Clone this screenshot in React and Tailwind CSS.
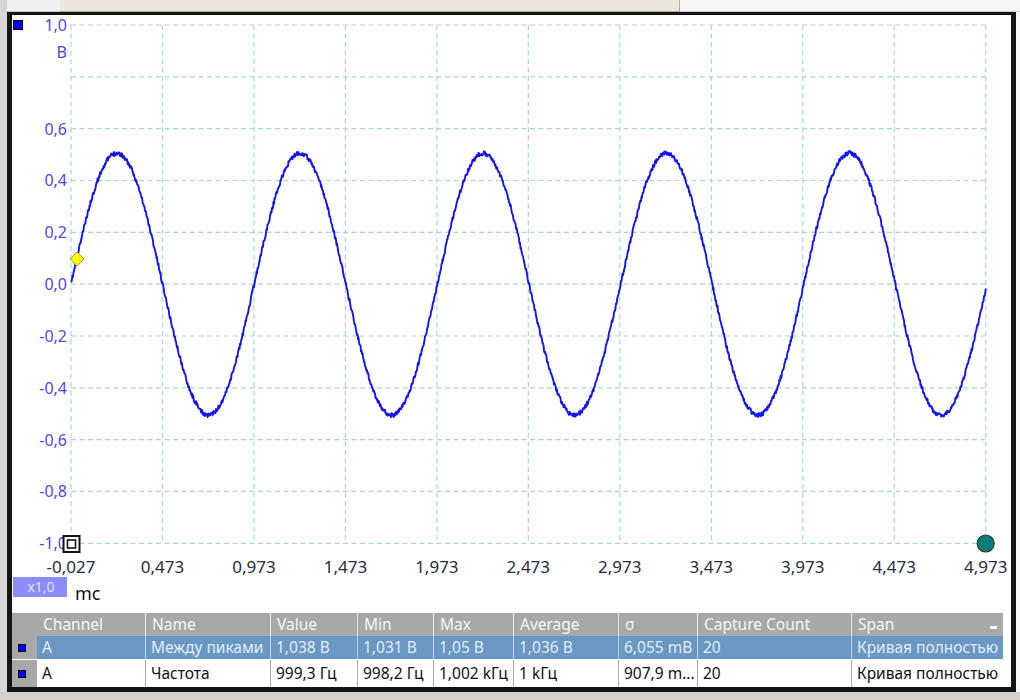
import React from 'react'

// scope geometry (page coordinates)
const X0 = 71
const DX = 91.47
const Y0 = 25
const DY = 51.83
const PERIOD = 183.2

const xTicks = ['-0,027', '0,473', '0,973', '1,473', '1,973', '2,473', '2,973', '3,473', '3,973', '4,473', '4,973']
const yTicks = [
  { i: 0, t: '1,0' },
  { i: 2, t: '0,6' },
  { i: 3, t: '0,4' },
  { i: 4, t: '0,2' },
  { i: 5, t: '0,0' },
  { i: 6, t: '-0,2' },
  { i: 7, t: '-0,4' },
  { i: 8, t: '-0,6' },
  { i: 9, t: '-0,8' },
  { i: 10, t: '-1,0' },
]

function buildWave() {
  let seed = 11
  const rnd = () => {
    seed = (seed * 16807) % 2147483647
    return seed / 2147483647
  }
  const mid = Y0 + 5 * DY
  let d = ''
  for (let x = X0; x <= 986; x += 0.5) {
    const ph = ((x - X0) / PERIOD) * Math.PI * 2
    const y = mid - 131 * Math.sin(ph) + (rnd() - 0.5) * 4.4
    d += (d ? 'L' : 'M') + x.toFixed(1) + ' ' + y.toFixed(1)
  }
  return d
}

const wave = buildWave()

function Scope() {
  const gridX = xTicks.map((_, i) => X0 + i * DX)
  const gridY = Array.from({ length: 11 }, (_, i) => Y0 + i * DY)
  return (
    <svg viewBox="12 15 999 598" className="block w-[999px] h-[598px] shrink-0" style={{ fontFamily: '"Noto Sans", "Open Sans", sans-serif' }}>
      <rect x="12" y="15" width="999" height="598" fill="#fff" />
      {gridX.map((x) => (
        <line key={'v' + x} x1={x} y1={Y0} x2={x} y2={Y0 + 10 * DY} stroke="#a9d6e6" strokeWidth="1.2" strokeDasharray="5 3.5" />
      ))}
      {gridY.map((y) => (
        <line key={'h' + y} x1={X0} y1={y} x2={X0 + 10 * DX} y2={y} stroke="#a9d6e6" strokeWidth="1.2" strokeDasharray="5 3.5" />
      ))}
      {yTicks.map(({ i, t }) => (
        <text key={t} x="67" y={Y0 + i * DY + 6} textAnchor="end" fontSize="16" fill="#5544ee">
          {t}
        </text>
      ))}
      <text x="67" y="58" textAnchor="end" fontSize="16" fill="#4a44f0">В</text>
      {xTicks.map((t, i) => (
        <text key={t} x={gridX[i]} y="573" textAnchor="middle" fontSize="17" fill="#2a2a44">
          {t}
        </text>
      ))}
      <path d={wave} fill="none" stroke="#1414f0" strokeWidth="1.9" strokeLinejoin="round" />
      {/* channel marker */}
      <rect x="13.5" y="20.5" width="9" height="9" fill="#0000ff" stroke="#000" strokeWidth="1" />
      {/* trigger diamond */}
      <polygon points="77,252 84,259 77,266 70,259" fill="#ffff00" stroke="#a0a040" strokeWidth="1" />
      {/* ruler markers */}
      <rect x="63.5" y="536" width="16" height="16" fill="#fff" stroke="#111" strokeWidth="2" />
      <rect x="67.5" y="540" width="8" height="8" fill="#fff" stroke="#111" strokeWidth="1.6" />
      <circle cx="985.7" cy="543.5" r="8.5" fill="#0e7d7a" stroke="#1d3a3a" strokeWidth="1.2" />
      {/* zoom box & units */}
      <rect x="13" y="577" width="54" height="20" fill="#8a8cff" />
      <text x="41" y="592" textAnchor="middle" fontSize="14" fill="#e4e4ff">x1,0</text>
      <text x="75" y="600" fontSize="18" fill="#111">mc</text>
    </svg>
  )
}

const cols = [
  { name: 'Channel', w: 'w-[108px]' },
  { name: 'Name', w: 'w-[125px]' },
  { name: 'Value', w: 'w-[87px]' },
  { name: 'Min', w: 'w-[76px]' },
  { name: 'Max', w: 'w-[80px]' },
  { name: 'Average', w: 'w-[105px]' },
  { name: 'σ', w: 'w-[79px]' },
  { name: 'Capture Count', w: 'w-[154px]' },
  { name: 'Span', w: 'w-[152px]' },
]

const rows = [
  ['A', 'Между пиками', '1,038 В', '1,031 В', '1,05 В', '1,036 В', '6,055 mВ', '20', 'Кривая полностью'],
  ['A', 'Частота', '999,3 Гц', '998,2 Гц', '1,002 kГц', '1 kГц', '907,9 m...', '20', 'Кривая полностью'],
]

function Measurements() {
  return (
    <div className="flex flex-col text-[15.5px] leading-none flex-1 bg-white" style={{ fontFamily: '"Noto Sans", "Open Sans", sans-serif' }}>
      <div className="flex h-[23px] bg-white">
        <div className="w-[25px] bg-[#a8a8a8]" />
        {cols.map((c, i) => (
          <div key={c.name} className={`${c.w} flex items-center justify-between bg-[#a8a8a8] text-[#f6f6f6] pl-[6px] pr-[6px] ${i > 0 ? 'border-l border-[#e6e6e6]' : ''}`}>
            <span>{c.name}</span>
            {c.name === 'Span' && <span className="w-[7px] h-[3px] bg-white mt-[6px]" />}
          </div>
        ))}
      </div>
      {rows.map((r, ri) => (
        <div key={ri} className={`flex bg-white ${ri === 0 ? 'h-[23px]' : 'h-[28px] pt-px'}`}>
          <div className="w-[25px] bg-[#a8a8a8] flex items-center pl-[6px]">
            <span className="w-[8px] h-[8px] bg-[#0000ff] border border-black" />
          </div>
          {cols.map((c, i) => (
            <div
              key={c.name}
              className={`${c.w} flex items-center pl-[5px] whitespace-nowrap overflow-hidden ${
                ri === 0 ? 'bg-[#6a98c2] text-[#e2edf8]' : 'bg-white text-[#111]'
              } ${i > 0 ? (ri === 0 ? 'border-l border-[#b9cfe3]' : 'border-l border-[#a9a9a9]') : ''}`}
            >
              {r[i]}
            </div>
          ))}
        </div>
      ))}
    </div>
  )
}

export default function App() {
  return (
    <div className="w-[1020px] h-[700px] overflow-hidden bg-[#f4f4f4] flex flex-col">
      <div className="h-[12px] flex shrink-0">
        <div className="w-[7px] bg-[#d4d4d4]" />
        <div className="w-[53px] bg-[#f0f0f0] border-b border-[#c8c8c8]" />
        <div className="w-[620px] bg-[#ebe5dc] border-b border-r border-[#b9ad9c]" />
        <div className="flex-1 bg-[#f6f5f3] border-b border-[#cfcfcf]" />
      </div>
      <div className="flex h-[680px] shrink-0">
        <div className="w-[7px] shrink-0 bg-[#d8d8d8]" />
        <div className="w-[1009px] h-[680px] shrink-0 bg-[#141414] pt-[3px] pl-[5px] pr-[5px] pb-[5px] flex">
          <div className="flex-1 bg-white flex flex-col overflow-hidden">
            <Scope />
            <Measurements />
          </div>
        </div>
        <div className="flex-1 bg-[#f7f7f7]" />
      </div>
      <div className="flex-1 bg-[#d6d0c8]" />
    </div>
  )
}
